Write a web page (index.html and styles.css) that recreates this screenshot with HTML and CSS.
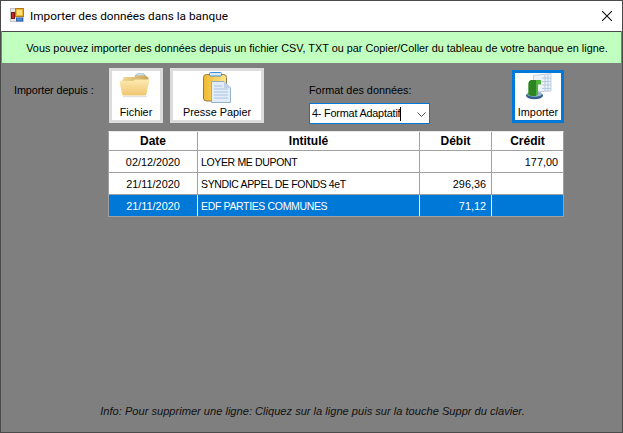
FILE: index.html
```html
<!DOCTYPE html>
<html lang="fr">
<head>
<meta charset="utf-8">
<title>Importer des données dans la banque</title>
<link rel="stylesheet" href="styles.css">
</head>
<body>
<div class="window">
  <header class="titlebar">
    <svg class="app-icon" width="16" height="16" viewBox="0 0 16 16">
      <rect x="0.5" y="0.5" width="13" height="13" fill="#e6e6e6" stroke="#c4c4c4"/>
      <rect x="5.5" y="0.5" width="8" height="8" fill="#f3b52c" stroke="#b27d14"/>
      <rect x="7" y="2" width="5" height="5" fill="#ffdf80"/>
      <rect x="1.5" y="4.5" width="3" height="6" fill="#c4281c" stroke="#7d1810"/>
      <rect x="6.5" y="10" width="6" height="3" fill="#4f8fe0" stroke="#2b62ad"/>
    </svg>
    <span class="title">Importer des données dans la banque</span>
    <svg class="close" width="10" height="10" viewBox="0 0 10 10"><path d="M0 0L10 10M10 0L0 10" stroke="#111" stroke-width="1.1" fill="none"/></svg>
  </header>
  <div class="notice">Vous pouvez importer des données depuis un fichier CSV, TXT ou par Copier/Coller du tableau de votre banque en ligne.</div>
  <main class="content">
    <div class="toolbar">
      <span class="from-label">Importer depuis :</span>
      <button class="tool tool-file">
        <svg class="icon-file" width="34" height="26" viewBox="0 0 34 26">
          <defs>
            <linearGradient id="fold" x1="0" y1="0" x2="0" y2="1"><stop offset="0" stop-color="#fdeab0"/><stop offset="1" stop-color="#eec672"/></linearGradient>
            <linearGradient id="foldback" x1="0" y1="0" x2="1" y2="0"><stop offset="0" stop-color="#f0d890"/><stop offset="1" stop-color="#c9a65e"/></linearGradient>
          </defs>
          <path d="M16 3L18 0.8H25L26 3Z" fill="#e7eef3" stroke="#7fa9c4" stroke-width="0.7"/>
          <path d="M3 8L5 4H15L17 2.5H27L29.5 5V11H3Z" fill="url(#foldback)"/>
          <path d="M0.5 8H14L16 6.5H30.5L27.5 21Q27 22.5 25.5 22.5H5Q3.5 22.5 3 21Z" fill="url(#fold)"/>
          <rect x="4" y="23" width="24" height="1.2" fill="#e2e2e2"/>
        </svg>
        <span>Fichier</span>
      </button>
      <button class="tool tool-paste">
        <svg width="28" height="31" viewBox="0 0 28 31">
          <defs>
            <linearGradient id="clip" x1="0" y1="0" x2="1" y2="0"><stop offset="0" stop-color="#f0b92f"/><stop offset="1" stop-color="#ffe68f"/></linearGradient>
          </defs>
          <rect x="0.5" y="2.5" width="23" height="26.500" rx="3" fill="url(#clip)" stroke="#8f7a4a"/>
          <rect x="6.500" y="0.5" width="12" height="3.500" rx="1" fill="#dbeaf7" stroke="#3f93d8"/>
          <path d="M8.500 9.500H21L27.500 16V30.500H8.500Z" fill="#e3edf8" stroke="#7f9fc2" stroke-width="0.8"/>
          <path d="M21 9.500V16H27.500Z" fill="#bfd2e8"/>
          <path d="M11 14H19M11 17H25M11 20H25M11 23H25M11 26H25" stroke="#a9c2e2" stroke-width="1"/>
        </svg>
        <span>Presse Papier</span>
      </button>
      <div class="format">
        <label class="format-label">Format des données:</label>
        <div class="combo">
          <span class="combo-text">4- Format Adaptatif</span><span class="caret"></span>
          <svg class="chevron" width="9" height="5" viewBox="0 0 9 5"><path d="M0.5 0.5L4.500 4.500L8.500 0.5" stroke="#555" fill="none"/></svg>
        </div>
      </div>
      <button class="tool tool-import">
        <svg width="28" height="27" viewBox="0 0 28 27">
          <path d="M9.500 2.500L27 0.5V18L9.500 19Z" fill="#edf2f6" stroke="#aebccb" stroke-width="0.7"/>
          <path d="M18 5H27M18 8.500H27M18 12H27M18 15.500H27M21 2V18M24 1V18" stroke="#b5cbe3" stroke-width="1"/>
          <ellipse cx="10.500" cy="22.500" rx="8.500" ry="3.800" fill="#33608f"/>
          <ellipse cx="10.500" cy="21" rx="7.500" ry="2.800" fill="#9dbad6"/>
          <path d="M4.500 22V11Q4.500 7 8.500 7H17V11.500H14V22Q9 24 4.500 22Z" fill="#4fb23a"/>
          <path d="M4.500 11Q4.500 7 8.500 7H12V22.800Q8 23.400 4.500 22Z" fill="#2e8423"/>
        </svg>
        <span>Importer</span>
      </button>
    </div>
    <div class="grid">
      <div class="row head">
        <div class="cell">Date</div><div class="cell">Intitulé</div><div class="cell">Débit</div><div class="cell">Crédit</div>
      </div>
      <div class="row">
        <div class="cell center">02/12/2020</div><div class="cell left">LOYER ME DUPONT</div><div class="cell right"></div><div class="cell right">177,00</div>
      </div>
      <div class="row">
        <div class="cell center">21/11/2020</div><div class="cell left">SYNDIC APPEL DE FONDS 4eT</div><div class="cell right">296,36</div><div class="cell right"></div>
      </div>
      <div class="row selected">
        <div class="cell center">21/11/2020</div><div class="cell left">EDF PARTIES COMMUNES</div><div class="cell right">71,12</div><div class="cell right"></div>
      </div>
    </div>
    <p class="info">Info: Pour supprimer une ligne: Cliquez sur la ligne puis sur la touche Suppr du clavier.</p>
  </main>
</div>
</body>
</html>
```
FILE: styles.css
```css
* { box-sizing: border-box; }
html, body { margin: 0; padding: 0; }
body { width: 623px; height: 433px; overflow: hidden; font-family: "Liberation Sans", Arial, sans-serif; font-size: 10.85px; color: #000; }
.window { width: 623px; height: 433px; display: flex; flex-direction: column; background: #7f7f7f; border: 1px solid #4a4a4a; }
.titlebar { height: 30px; flex: none; background: #fff; display: flex; align-items: center; padding: 0 10px 0 9px; }
.app-icon { margin-right: 4px; }
.title { flex: 1; font-family: Roboto, sans-serif; font-size: 11.8px; color: #000; }
.notice { height: 32px; flex: none; background: #c0ffc0; border-top: 1px solid #4a4a4a; margin: 0 1px; padding-left: 11px; display: flex; align-items: center; justify-content: center; color: #000; }
.content { flex: 1; display: flex; flex-direction: column; padding: 5px 58px 0 13px; min-height: 0; }
.toolbar { display: flex; align-items: flex-start; height: 63px; flex: none; }
.from-label { width: 95px; margin-top: 16px; letter-spacing: -0.1px; }
.tool { appearance: none; font: inherit; color: #000; background: #fff; border: 3px solid #dcdcdc; padding: 0; height: 55px; display: flex; flex-direction: column; align-items: center; justify-content: flex-start; }
.tool span { margin-top: auto; padding-bottom: 2px; }
.tool-file { width: 54px; margin-right: 7px; padding-top: 2px; }
.tool-paste { width: 94px; margin-right: 45px; padding-top: 1px; }
.format { width: 121px; margin-right: 82px; padding-top: 16px; display: flex; flex-direction: column; gap: 6px; }
.format-label { line-height: 13px; }
.combo { height: 21px; background: #fff; border: 1px solid #0078d7; display: flex; align-items: center; padding-left: 2px; position: relative; }
.combo-text { line-height: 13px; letter-spacing: -0.2px; }
.caret { width: 1px; height: 14px; background: #000; }
.chevron { position: absolute; right: 3px; top: 8px; }
.tool-import { width: 52px; height: 53px; margin-top: 2px; border-color: #0078d7; }
.grid { width: 456px; margin-left: 94px; background: #a0a0a0; border: 1px solid #a0a0a0; border-top-color: #e8e8e8; display: flex; flex-direction: column; gap: 1px; flex: none; }
.row { display: grid; grid-template-columns: 88px 221px 71px 71px; column-gap: 1px; height: 21px; }
.row.head { height: 18px; }
.cell { background: #fff; display: flex; align-items: center; justify-content: center; padding: 0 4px; white-space: nowrap; }
.head .cell { font-weight: bold; font-size: 12px; }
.left { justify-content: flex-start; font-size: 10.5px; letter-spacing: -0.35px; padding-left: 3px; }
.right { justify-content: flex-end; padding-right: 5px; }
.selected { background: #fff; }
.selected .cell { background: #0078d7; color: #fff; }
.info { margin: auto 0 15px -13px; text-align: center; width: 623px; font-style: italic; font-size: 11.1px; color: #111; }
```
